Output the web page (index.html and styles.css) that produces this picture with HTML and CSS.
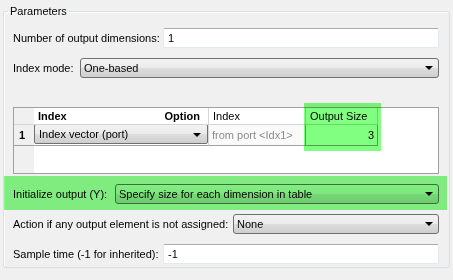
FILE: index.html
```html
<!doctype html>
<html>
<head>
    <meta charset="UTF-8">
    <title>Parameters</title>
    <link rel="stylesheet" href="styles.css">
</head>
<body>
<fieldset class="group">
    <legend>Parameters</legend>
    <div class="row row-dims">
        <label class="lbl lbl-wide">Number of output dimensions:</label>
        <div class="edit">1</div>
    </div>
    <div class="row row-mode">
        <label class="lbl lbl-mode">Index mode:</label>
        <div class="combo">One-based<span class="arrow"></span></div>
    </div>
    <div class="grid">
        <div class="cell num"></div>
        <div class="cell head head-split"><span>Index</span><span>Option</span></div>
        <div class="cell head plain">Index</div>
        <div class="cell head plain">Output Size</div>
        <div class="cell num body-row">1</div>
        <div class="cell body-row drop"><div class="combo combo-cell">Index vector (port)<span class="arrow"></span></div></div>
        <div class="cell body-row muted">from port &lt;Idx1&gt;</div>
        <div class="cell body-row right">3</div>
        <div class="hl hl-col"></div>
    </div>
    <div class="band">
        <div class="row">
            <label class="lbl lbl-init">Initialize output (Y):</label>
            <div class="combo">Specify size for each dimension in table<span class="arrow"></span></div>
        </div>
        <div class="hl"></div>
    </div>
    <div class="row row-action">
        <label class="lbl lbl-action">Action if any output element is not assigned:</label>
        <div class="combo">None<span class="arrow"></span></div>
    </div>
    <div class="row row-sample">
        <label class="lbl lbl-wide">Sample time (-1 for inherited):</label>
        <div class="edit">-1</div>
    </div>
</fieldset>
</body>
</html>
```

FILE: styles.css
```css
* {
    margin: 0;
    padding: 0;
    box-sizing: border-box;
}

body {
    width: 453px;
    height: 280px;
    padding-top: 5px;
    background-color: #f0f0f0;
    font-family: "Liberation Sans", Arial, sans-serif;
    font-size: 11px;
    color: #000;
    overflow: hidden;
}

.group {
    margin: 0 3px;
    height: 263px;
    border: 1px solid #d5dfe5;
    border-radius: 3px;
    padding: 10px 10px 8px 9px;
    box-shadow: inset 1px 1px 0 #fff;
}

.group legend {
    margin-left: -5px;
    padding: 0 2px;
    line-height: 13px;
}

.row {
    display: flex;
    align-items: center;
    height: 20px;
}

.row-mode {
    margin-top: 10px;
}

.row-action {
    margin-top: 4px;
}

.row-sample {
    margin-top: 10px;
}

.lbl {
    flex: none;
    white-space: nowrap;
}

.lbl-wide {
    width: 150px;
}

.lbl-mode {
    width: 67px;
}

.lbl-init {
    width: 102px;
}

.lbl-action {
    width: 220px;
}

.edit {
    flex: 1;
    height: 20px;
    line-height: 18px;
    padding-left: 4px;
    background-color: #fff;
    border: 1px solid #e3e9ef;
    border-top-color: #abadb3;
    border-radius: 2px;
}

.combo {
    position: relative;
    flex: 1;
    height: 20px;
    line-height: 18px;
    padding-left: 3px;
    border: 1px solid #707070;
    border-radius: 3px;
    background: linear-gradient(#f2f2f2, #ebebeb 50%, #dddddd 50%, #cfcfcf);
    white-space: nowrap;
}

.arrow {
    position: absolute;
    right: 5px;
    top: 7px;
    width: 0;
    height: 0;
    border-left: 4px solid transparent;
    border-right: 4px solid transparent;
    border-top: 4px solid #000;
}

.grid {
    position: relative;
    display: grid;
    grid-template-columns: 20px 175px 97px 72px;
    grid-template-rows: 17px 21px;
    align-content: start;
    height: 67px;
    margin-top: 29px;
    border: 1px solid #a0a0a0;
    background: linear-gradient(to right, #f0f0f0 20px, #fff 20px);
}

.cell {
    padding: 0 4px;
    line-height: 16px;
    border-bottom: 1px solid #d5d5d5;
    border-right: 1px solid #d5d5d5;
    white-space: nowrap;
    overflow: hidden;
}

.cell.num {
    border-right: none;
    font-weight: bold;
    padding-left: 5px;
}

.head {
    background-color: #fff;
}

.head-split {
    display: flex;
    justify-content: space-between;
    font-weight: bold;
    padding: 0 8px 0 4px;
}

.body-row {
    line-height: 20px;
    border-bottom-color: #a0a0a0;
}

.cell.drop {
    padding: 0;
    border-right-color: #d5d5d5;
}

.combo-cell {
    height: 20px;
    margin-top: -1px;
    padding-left: 4px;
    border-radius: 2px;
}

.combo-cell .arrow {
    top: 8px;
    right: 6px;
}

.muted {
    color: #8c8c8c;
    background-color: #fafafa;
    padding-left: 3px;
    border-right-color: #a0a0a0;
}

.right {
    text-align: right;
    padding-right: 3px;
    border-right-color: #a0a0a0;
}

.band {
    position: relative;
    margin: 2px -8px 0 -9px;
    padding: 8px 8px 6px 9px;
}

.hl {
    position: absolute;
    inset: 0;
    background-color: #88fb88;
    mix-blend-mode: multiply;
}

.hl-col {
    inset: auto;
    left: 290px;
    top: -5px;
    width: 77px;
    height: 48px;
    background-color: #80ff80;
}
```
